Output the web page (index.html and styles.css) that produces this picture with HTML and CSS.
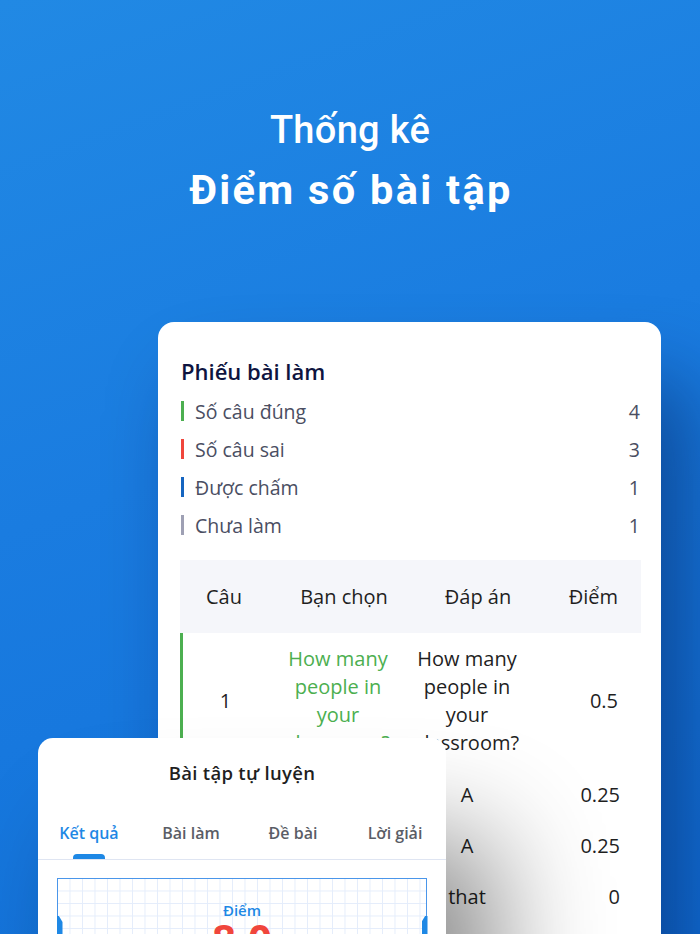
FILE: index.html
```html
<!DOCTYPE html>
<html lang="vi">
<head>
<meta charset="utf-8">
<link rel="stylesheet" href="styles.css">
</head>
<body>
<div class="page">
  <header class="hero">
    <div class="hero-line1">Thống kê</div>
    <div class="hero-line2">Điểm số bài tập</div>
  </header>

  <section class="sheet">
    <h2 class="sheet-title">Phiếu bài làm</h2>
    <ul class="stats">
      <li class="stat"><span class="bar bar-green"></span><span class="stat-label">Số câu đúng</span><span class="stat-val">4</span></li>
      <li class="stat"><span class="bar bar-red"></span><span class="stat-label">Số câu sai</span><span class="stat-val">3</span></li>
      <li class="stat"><span class="bar bar-blue"></span><span class="stat-label">Được chấm</span><span class="stat-val">1</span></li>
      <li class="stat"><span class="bar bar-grey"></span><span class="stat-label">Chưa làm</span><span class="stat-val">1</span></li>
    </ul>

    <div class="table">
      <div class="trow thead">
        <div class="c1">Câu</div>
        <div class="c2 h2">Bạn chọn</div>
        <div class="c3 h3">Đáp án</div>
        <div class="c4">Điểm</div>
      </div>
      <div class="trow tbig correct">
        <div class="c1">1</div>
        <div class="c2 green">How many people in your classroom?</div>
        <div class="c3">How many people in your classroom?</div>
        <div class="c4">0.5</div>
      </div>
      <div class="trow tsmall correct">
        <div class="c1">2</div>
        <div class="c2 green">A</div>
        <div class="c3">A</div>
        <div class="c4">0.25</div>
      </div>
      <div class="trow tsmall correct">
        <div class="c1">3</div>
        <div class="c2 green">A</div>
        <div class="c3">A</div>
        <div class="c4">0.25</div>
      </div>
      <div class="trow tsmall wrong">
        <div class="c1">4</div>
        <div class="c2 red">this</div>
        <div class="c3">that</div>
        <div class="c4">0</div>
      </div>
    </div>
  </section>

  <section class="mini">
    <div class="mini-title">Bài tập tự luyện</div>
    <nav class="tabs">
      <div class="tab active"><span class="tab-text">Kết quả</span><span class="tab-bar"></span></div>
      <div class="tab"><span class="tab-text">Bài làm</span><span class="tab-bar"></span></div>
      <div class="tab"><span class="tab-text">Đề bài</span><span class="tab-bar"></span></div>
      <div class="tab"><span class="tab-text">Lời giải</span><span class="tab-bar"></span></div>
    </nav>
    <div class="score-box">
      <span class="notch notch-left"></span>
      <span class="notch notch-right"></span>
      <div class="score-label">Điểm</div>
      <div class="score-value">8.0</div>
    </div>
  </section>
</div>
</body>
</html>
```

FILE: styles.css
```css
* { box-sizing: border-box; }

html, body {
  margin: 0;
  padding: 0;
}

body {
  width: 700px;
  height: 934px;
  overflow: hidden;
  font-family: "Open Sans", "Noto Sans", sans-serif;
}

.page {
  position: relative;
  width: 700px;
  height: 934px;
  overflow: hidden;
  background: linear-gradient(160deg, #2189e4 0%, #1a7ce0 45%, #1170da 100%);
}

.hero {
  padding-top: 100px;
  text-align: center;
  color: #fff;
  font-family: Roboto, "Noto Sans", sans-serif;
}

.hero-line1 {
  font-size: 38px;
  font-weight: 500;
  line-height: 60px;
  letter-spacing: 0.3px;
}

.hero-line2 {
  font-size: 41.5px;
  font-weight: 700;
  line-height: 60px;
  letter-spacing: 2.3px;
  padding-left: 2px;
}

.sheet {
  margin: 102px 0 0 158px;
  width: 503px;
  height: 720px;
  background: #fff;
  border-radius: 16px;
  padding: 34px 21px 0 23px;
  box-shadow: 30px 60px 80px rgba(0, 20, 70, 0.45);
}

.sheet-title {
  margin: 0;
  font-size: 22px;
  font-weight: 600;
  line-height: 30px;
  color: #0e1440;
}

.stats {
  list-style: none;
  margin: 6px 0 0;
  padding: 0;
}

.stat {
  display: flex;
  align-items: center;
  height: 38px;
  font-size: 19.5px;
  color: #4a4e62;
}

.bar {
  width: 3px;
  height: 20px;
  margin-right: 11px;
  flex: none;
}
.bar-green { background: #4caf50; }
.bar-red { background: #f0463c; }
.bar-blue { background: #1565c0; }
.bar-grey { background: #9ea0b4; }

.stat-label { flex: 1; }
.stat-val { text-align: right; }

.table {
  margin-top: 16px;
  margin-left: -1px;
  width: 461px;
  font-size: 20px;
  color: #1f1f1f;
}

.trow {
  display: grid;
  grid-template-columns: 88px 134px 124px 115px;
  align-items: center;
  text-align: center;
}

.thead {
  height: 73px;
  background: #f5f6fa;
}

.trow .c2 { padding: 0 10px; }
.trow .c3 { padding: 0 5px; }
.trow .c4 { text-align: right; padding-right: 24px; }

.thead .h2 { padding-left: 18px; padding-right: 0; }
.thead .h3 { padding-left: 28px; padding-right: 0; }
.thead .c4 { padding-right: 23px; }

.tbig {
  height: 136px;
  line-height: 28px;
}

.tbig .c4 { padding-right: 26px; }

.tsmall {
  height: 51px;
}

.correct { border-left: 3px solid #4caf50; }
.wrong { border-left: 3px solid #f0463c; }

.tbig .c1, .tsmall .c1 { margin-left: -3px; }

.green { color: #4caf50; }
.red { color: #f0463c; }

/* floating mini card */
.mini {
  position: absolute;
  left: 38px;
  top: 738px;
  width: 408px;
  height: 420px;
  background: #fff;
  border-radius: 15px;
  box-shadow: 50px 100px 110px rgba(0, 0, 0, 0.45);
}

.mini-title {
  padding-top: 21px;
  line-height: 28px;
  text-align: center;
  font-size: 18.5px;
  font-weight: 600;
  letter-spacing: 0.3px;
  color: #1f1f1f;
}

.tabs {
  display: grid;
  grid-template-columns: repeat(4, 1fr);
  border-bottom: 1px solid #dfe5f2;
}

.tab {
  display: flex;
  flex-direction: column;
  align-items: center;
  padding-top: 34px;
  font-size: 16px;
  font-weight: 600;
  color: #5a5d66;
}

.tab-text {
  line-height: 24px;
}

.tab-bar {
  margin-top: 9px;
  width: 32px;
  height: 5px;
  border-radius: 4px 4px 0 0;
  background: transparent;
}

.tab.active { color: #1e88e5; }
.tab.active .tab-bar { background: #1e88e5; }

.score-box {
  position: relative;
  margin: 18px 19px 0;
  height: 200px;
  border: 1.5px solid #4a96ea;
  background-color: #fff;
  background-image:
    linear-gradient(#e4edfb 1px, transparent 1px),
    linear-gradient(90deg, #e4edfb 1px, transparent 1px);
  background-size: 12.5px 12.5px;
  background-position: -1px -1px;
  text-align: center;
}

.notch {
  position: absolute;
  top: 37px;
  width: 6px;
  height: 40px;
  background: #1e88e5;
}
.notch-left {
  left: -1.5px;
  clip-path: polygon(0 0, 40% 0, 100% 6px, 100% 100%, 0 100%);
}
.notch-right {
  right: -1.5px;
  clip-path: polygon(60% 0, 100% 0, 100% 100%, 0 100%, 0 6px);
}

.score-label {
  padding-top: 20px;
  line-height: 22px;
  font-size: 15px;
  font-weight: 600;
  color: #1e88e5;
}

.score-value {
  margin-top: -4px;
  line-height: 44px;
  font-size: 42px;
  font-weight: 700;
  color: #f0463c;
}
```
